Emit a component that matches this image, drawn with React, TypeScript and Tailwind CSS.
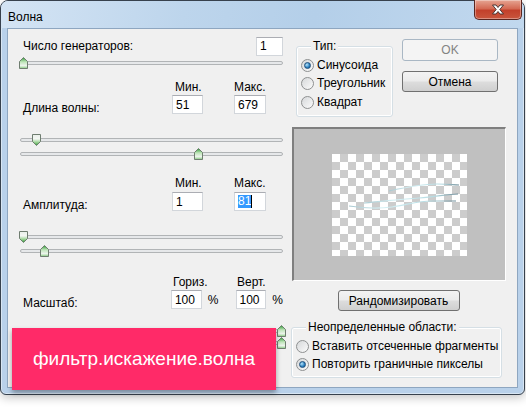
import React from 'react';

function Thumb({ dir }: { dir: 'up' | 'down' }) {
    if (dir === 'up') {
        return (
            <svg width="9" height="12" viewBox="0 0 9 12">
                <defs>
                    <linearGradient id="thumbUp" x1="0" y1="0" x2="0" y2="1">
                        <stop offset="0" stopColor="#2f9a36" />
                        <stop offset="0.4" stopColor="#bfe5b9" />
                        <stop offset="0.75" stopColor="#eef5ee" />
                        <stop offset="1" stopColor="#7fc777" />
                    </linearGradient>
                </defs>
                <path d="M0.5 4.5 L4.5 0.5 L8.5 4.5 V11.5 H0.5 Z" fill="url(#thumbUp)" stroke="#6f7d70" />
            </svg>
        );
    }
    return (
        <svg width="9" height="12" viewBox="0 0 9 12">
            <defs>
                <linearGradient id="thumbDown" x1="0" y1="0" x2="0" y2="1">
                    <stop offset="0" stopColor="#e9efe9" />
                    <stop offset="0.4" stopColor="#f4f7f4" />
                    <stop offset="0.7" stopColor="#9fd497" />
                    <stop offset="1" stopColor="#2f9a36" />
                </linearGradient>
            </defs>
            <path d="M0.5 0.5 H8.5 V7.5 L4.5 11.5 L0.5 7.5 Z" fill="url(#thumbDown)" stroke="#6f7d70" />
        </svg>
    );
}

function Slider({ thumb, dir, className = '' }: { thumb: string; dir: 'up' | 'down'; className?: string }) {
    return (
        <div className={`relative h-[12px] flex items-center ${className}`}>
            <div className="ml-[1px] w-[263px] h-[4px] rounded-full border border-[#b1b4b6] bg-[#e6e8ea]" />
            <div className={`absolute top-0 ${thumb}`}>
                <Thumb dir={dir} />
            </div>
        </div>
    );
}

function Field({ children, className = '' }: { children?: React.ReactNode; className?: string }) {
    return (
        <div
            className={`h-[19px] flex items-center pl-[3px] bg-white border border-[#d2d6db] border-t-[#abadb3] text-black ${className}`}
        >
            {children}
        </div>
    );
}

function Radio({ checked }: { checked?: boolean }) {
    return (
        <div className="w-[13px] h-[13px] rounded-full border border-[#8e9091] bg-[linear-gradient(135deg,#d6d8da,#fbfbfb)] flex items-center justify-center">
            {checked && (
                <div className="w-[7px] h-[7px] rounded-full border border-[#1e4f7c] bg-[radial-gradient(circle_at_35%_35%,#b7e5fb,#2a7fbf_60%,#1a5d93)]" />
            )}
        </div>
    );
}

function Button({ children, disabled, className = '' }: { children: React.ReactNode; disabled?: boolean; className?: string }) {
    return (
        <div
            className={
                disabled
                    ? `h-[22px] flex items-center justify-center rounded-[3px] border border-[#a9b7c4] bg-[#f4f4f4] text-[#838383] ${className}`
                    : `h-[21px] flex items-center justify-center rounded-[3px] border border-[#707070] bg-[linear-gradient(#f3f3f3,#ebebeb_48%,#dddddd_52%,#cfcfcf)] text-black ${className}`
            }
        >
            {children}
        </div>
    );
}

function CloseButton() {
    return (
        <div className="w-[48px] h-[20px] -mt-px mr-[2px] rounded-b-[5px] border border-t-0 border-[#5a2620] bg-[linear-gradient(#e6a593,#d46a54_45%,#c2402b_55%,#c9563d)] flex items-center justify-center shadow-[inset_0_0_0_1px_rgba(255,255,255,0.35)]">
            <svg width="14" height="11" viewBox="0 0 14 11">
                <path
                    d="M1.5 1 H5 L7 3.5 L9 1 H12.5 L8.8 5.5 L12.5 10 H9 L7 7.5 L5 10 H1.5 L5.2 5.5 Z"
                    fill="#ffffff"
                    stroke="#3b2b2b"
                    strokeWidth="0.9"
                    strokeLinejoin="round"
                />
            </svg>
        </div>
    );
}

export default function App() {
    return (
        <div className="w-[526px] h-[417px] bg-white overflow-hidden font-['Liberation_Sans',Arial,sans-serif] text-[12px] leading-[14px] text-black">
            <div className="w-[525px] h-[395px] flex flex-col rounded-t-[8px] rounded-b-[6px] border border-[#37414d] bg-[#b9d1ea] shadow-[0_3px_10px_rgba(0,0,0,0.22),inset_0_0_0_1px_rgba(255,255,255,0.45)]">
                {/* title bar */}
                <div className="h-[27px] flex justify-between rounded-t-[7px] bg-[linear-gradient(100deg,#d4e4f4,#bdd5ec_35%,#b4cfe9_60%,#c1d8ee)]">
                    <span className="self-center pl-[7px] pt-[4px] text-[12px]">Волна</span>
                    <CloseButton />
                </div>

                {/* client */}
                <div className="relative flex-1 mx-[6px] mb-[6px] flex border border-[#8ea6c0] bg-[#f0f0f0]">
                    {/* left column */}
                    <div className="w-[264px] ml-[11px] pt-[8px] flex flex-col">
                        <div className="h-[18px] flex items-center justify-between">
                            <span className="pl-[4px]">Число генераторов:</span>
                            <Field className="w-[27px] h-[18px]">1</Field>
                        </div>
                        <Slider className="mt-[2px]" dir="up" thumb="left-0" />

                        <div className="mt-[11px] h-[14px] flex">
                            <span className="ml-[156px] w-[59px]">Мин.</span>
                            <span>Макс.</span>
                        </div>
                        <div className="mt-[1px] flex items-start">
                            <span className="w-[153px] pl-[4px] pt-[6px]">Длина волны:</span>
                            <Field className="w-[31px]">51</Field>
                            <Field className="ml-[31px] w-[32px]">679</Field>
                        </div>
                        <Slider className="mt-[19px]" dir="down" thumb="left-[13px]" />
                        <Slider className="mt-[2px]" dir="up" thumb="left-[175px]" />

                        <div className="mt-[16px] h-[14px] flex">
                            <span className="ml-[156px] w-[59px]">Мин.</span>
                            <span>Макс.</span>
                        </div>
                        <div className="mt-[2px] flex items-start">
                            <span className="w-[153px] pl-[4px] pt-[6px]">Амплитуда:</span>
                            <Field className="w-[31px]">1</Field>
                            <Field className="ml-[31px] w-[32px] pl-[2px]">
                                <span className="bg-[#3399ff] text-white leading-[13px]">81</span>
                                <span className="w-px h-[13px] bg-black" />
                            </Field>
                        </div>
                        <Slider className="mt-[19px]" dir="down" thumb="left-0" />
                        <Slider className="mt-[2px]" dir="up" thumb="left-[21px]" />

                        <div className="mt-[18px] h-[14px] flex">
                            <span className="ml-[154px] w-[64px]">Гориз.</span>
                            <span>Верт.</span>
                        </div>
                        <div className="mt-[1px] flex items-start">
                            <span className="w-[153px] pl-[4px] pt-[6px]">Масштаб:</span>
                            <Field className="w-[31px]">100</Field>
                            <span className="ml-[6px] w-[28px] pt-[3px]">%</span>
                            <Field className="w-[31px]">100</Field>
                            <span className="ml-[6px] pt-[3px]">%</span>
                        </div>
                        <Slider className="mt-[15px]" dir="up" thumb="left-[258px]" />
                        <Slider className="mt-0" dir="up" thumb="left-[258px]" />
                    </div>

                    {/* right column */}
                    <div className="w-[215px] ml-[8px] pt-[10px] flex flex-col">
                        <div className="flex">
                            <div className="relative mt-[7px] ml-[5px] w-[97px] h-[71px] rounded-[3px] border border-[#d5dfe5] pt-[9px] pl-[4px] shadow-[inset_0_0_0_1px_#ffffff]">
                                <span className="absolute -top-[8px] left-[14px] px-[2px] bg-[#f0f0f0]">Тип:</span>
                                <div className="h-[18px] flex items-center gap-[3px]">
                                    <Radio checked />
                                    <span>Синусоида</span>
                                </div>
                                <div className="h-[18px] flex items-center gap-[3px]">
                                    <Radio />
                                    <span>Треугольник</span>
                                </div>
                                <div className="mt-[1px] h-[18px] flex items-center gap-[3px]">
                                    <Radio />
                                    <span>Квадрат</span>
                                </div>
                            </div>
                            <div className="ml-[9px] w-[96px] flex flex-col">
                                <Button disabled>OK</Button>
                                <Button className="mt-[10px]">Отмена</Button>
                            </div>
                        </div>

                        <div className="mt-[10px] ml-px w-[214px] h-[154px] flex items-center justify-center bg-[#c0c0c0] border-t-2 border-l-2 border-r border-b border-t-[#7f7f7f] border-l-[#7f7f7f] border-r-white border-b-white">
                            <div className="w-[135px] h-[102px] bg-[image:conic-gradient(#cccccc_25%,#ffffff_0_50%,#cccccc_0_75%,#ffffff_0)] bg-[length:16px_16px]">
                                <svg width="135" height="102" viewBox="0 0 135 102">
                                    <defs>
                                        <linearGradient id="wave" x1="0" y1="0" x2="1" y2="0">
                                            <stop offset="0" stopColor="#a7c7cf" />
                                            <stop offset="0.3" stopColor="#d6f1f5" />
                                            <stop offset="0.75" stopColor="#b6dbe2" />
                                            <stop offset="1" stopColor="#6f8c98" />
                                        </linearGradient>
                                    </defs>
                                    <g fill="none" stroke="url(#wave)" strokeWidth="1.2">
                                        <path d="M57 37 C75 33, 90 30, 105 30 S120 31, 127 31" />
                                        <path d="M32 49 C55 47, 70 45, 87 44 S115 40, 126 40" />
                                        <path d="M17 52 C30 54, 45 55, 60 53 S85 47, 100 47 S118 47, 124 47" />
                                    </g>
                                </svg>
                            </div>
                        </div>

                        <div className="mt-[9px] flex justify-center">
                            <Button className="w-[122px]">Рандомизировать</Button>
                        </div>

                        <div className="relative mt-[16px] w-[211px] h-[51px] rounded-[3px] border border-[#d5dfe5] pt-[9px] pl-[4px] shadow-[inset_0_0_0_1px_#ffffff]">
                            <span className="absolute -top-[8px] left-[14px] px-[2px] bg-[#f0f0f0]">Неопределенные области:</span>
                            <div className="h-[18px] flex items-center gap-[3px]">
                                <Radio />
                                <span>Вставить отсеченные фрагменты</span>
                            </div>
                            <div className="h-[18px] flex items-center gap-[3px]">
                                <Radio checked />
                                <span>Повторить граничные пикселы</span>
                            </div>
                        </div>
                    </div>

                    {/* caption banner over the dialog */}
                    <div className="absolute left-[4px] top-[299px] w-[264px] h-[62px] flex items-center justify-center bg-[#ff2a68] shadow-[0_3px_5px_rgba(0,0,0,0.35)]">
                        <span className="text-white text-[19px] leading-[24px] font-['Liberation_Sans',Arial,sans-serif]">
                            фильтр.искажение.волна
                        </span>
                    </div>
                </div>
            </div>
        </div>
    );
}
